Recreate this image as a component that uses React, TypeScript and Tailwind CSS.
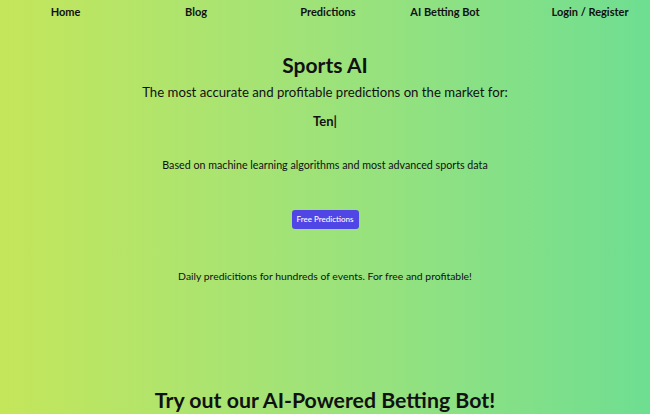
export default function App() {
  return (
    <div
      className="min-h-[414px] w-full bg-gradient-to-r from-[#c4e65a] to-[#6ede91] text-[#111] overflow-hidden"
      style={{ fontFamily: "Lato, 'Noto Sans', sans-serif" }}
    >
      {/* Nav */}
      <nav className="grid grid-cols-5 pt-[4px] text-center text-[11px] font-bold">
        <a className="ml-[1px]">Home</a>
        <a className="ml-[2px]">Blog</a>
        <a className="ml-[6px]">Predictions</a>
        <a className="-ml-[20px]">AI Betting Bot</a>
        <a className="ml-[10px]">Login / Register</a>
      </nav>

      {/* Hero */}
      <section className="flex flex-col items-center text-center pt-[29px]">
        <h1 className="text-[21px] font-bold leading-[30px]">Sports AI</h1>
        <p className="text-[13.2px] mt-[3px]">
          The most accurate and profitable predictions on the market for:
        </p>
        <p className="text-[13px] font-bold mt-[10px]">Ten|</p>

        <p className="text-[10.7px] mt-[25px]">
          Based on machine learning algorithms and most advanced sports data
        </p>

        <button className="mt-[37px] rounded-[3px] bg-[#4f46e5] px-[5px] py-[3.5px] text-[8px] text-white font-medium">
          Free Predictions
        </button>

        <p className="text-[10.4px] mt-[40px]">
          Daily predicitions for hundreds of events. For free and profitable!
        </p>

        <h2 className="text-[21.3px] font-bold mt-[101px]">
          Try out our AI-Powered Betting Bot!
        </h2>
      </section>
    </div>
  );
}
